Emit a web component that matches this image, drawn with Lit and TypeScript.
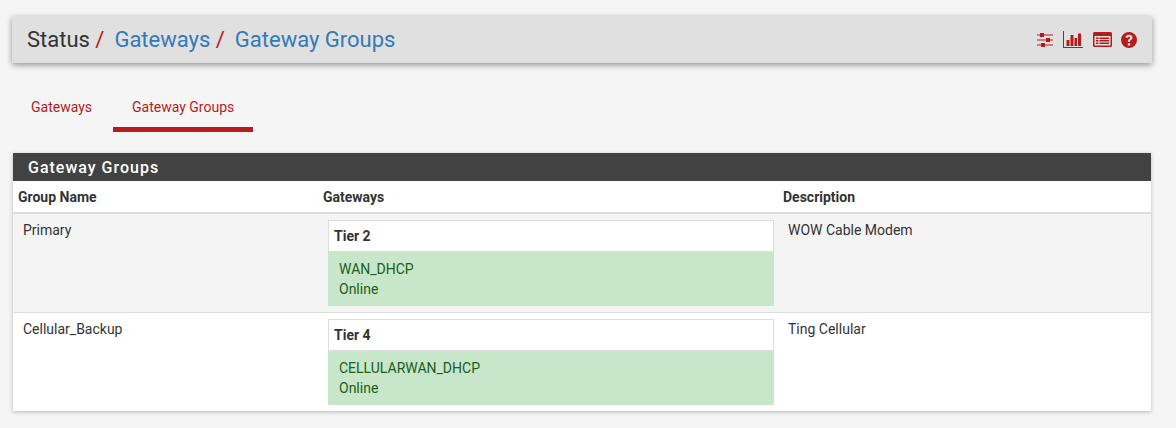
import { LitElement, html, css } from 'lit';
import { customElement } from 'lit/decorators.js';

const groups = [
  { name: 'Primary', tier: 'Tier 2', gateway: 'WAN_DHCP', status: 'Online', description: 'WOW Cable Modem' },
  { name: 'Cellular_Backup', tier: 'Tier 4', gateway: 'CELLULARWAN_DHCP', status: 'Online', description: 'Ting Cellular' },
];

@customElement('app-root')
export class AppRoot extends LitElement {
  static styles = css`
    :host {
      display: block;
      height: 428px;
      background: #f5f5f5;
      font-family: Roboto, sans-serif;
      font-size: 14px;
      color: #333;
      overflow: hidden;
    }

    .page {
      padding: 16px 24px 0 12px;
    }

    .breadcrumb {
      display: flex;
      align-items: center;
      justify-content: space-between;
      height: 47px;
      padding: 0 15px;
      background: #e0e0e0;
      box-shadow: 0 2px 6px rgba(0, 0, 0, 0.4);
    }

    .crumbs {
      font-size: 22px;
      white-space: pre;
    }

    .crumbs a {
      color: #337ab7;
      margin-left: 4.5px;
    }

    .crumbs i {
      font-style: normal;
      color: #b71c1c;
    }

    .icons {
      display: flex;
      align-items: center;
      gap: 9px;
    }

    .icons svg {
      display: block;
      fill: #b71c1c;
    }

    .icons svg.chart {
      margin: 0 1px 0 -1px;
    }

    .tabs {
      display: flex;
      margin-top: 24px;
    }

    .tab {
      width: 101px;
      height: 45px;
      padding: 11px 0 0 19px;
      box-sizing: border-box;
      line-height: 18px;
      white-space: nowrap;
      color: #b71c1c;
      border-bottom: 5px solid transparent;
    }

    .tab.active {
      width: 140px;
      border-bottom-color: #b71c1c;
    }

    .panel {
      margin: 21px 1px 0;
      width: 1138px;
      background: #fff;
      box-shadow: 0 1px 4px rgba(0, 0, 0, 0.25);
    }

    .panel h2 {
      margin: 0;
      height: 28px;
      padding-left: 15px;
      background: #424242;
      color: #fff;
      font-size: 16px;
      font-weight: 500;
      letter-spacing: 1px;
      line-height: 30px;
    }

    table {
      width: 100%;
      table-layout: fixed;
      border-collapse: separate;
      border-spacing: 0;
    }

    th {
      box-sizing: border-box;
      height: 33px;
      padding: 0 5px;
      text-align: left;
      font-weight: 700;
      border-bottom: 2px solid #ddd;
    }

    td {
      padding: 6px 10px;
      vertical-align: top;
      line-height: 20px;
    }

    td.gw {
      padding-right: 4px;
    }

    tbody tr:nth-child(odd) {
      background: #f4f4f4;
    }

    tbody tr + tr td {
      border-top: 1px solid #ddd;
    }

    .tier {
      border: 1px solid #ddd;
      border-bottom: 0;
      background: #fff;
    }

    .tier b {
      display: block;
      height: 30px;
      padding: 0 5px;
      line-height: 31px;
      border-bottom: 1px solid #ddd;
    }

    .status {
      height: 54px;
      padding: 7px 11px 0;
      box-sizing: border-box;
      margin: 0 -1px;
      background: #c8e6c9;
      color: #1b5e20;
      line-height: 20px;
    }
  `;

  render() {
    return html`
      <div class="page">
        <div class="breadcrumb">
          <div class="crumbs">Status<i> / </i><a>Gateways</a><i> / </i><a>Gateway Groups</a></div>
          <div class="icons">
            <svg width="18" height="16" viewBox="0 0 18 16">
              <path d="M0 2.400h16v1.200H0zM0 7.400h16v1.200H0zM0 12.400h16v1.200H0z" />
              <path d="M3 1h4v4H3zM9 6h4v4H9zM4 11h4v4H4z" />
            </svg>
            <svg class="chart" width="20" height="17" viewBox="0 0 20 17">
              <path d="M0 0h1v15.900H20V17H0z" />
              <path d="M3.500 9h3v6h-3zM7.500 4h3v11h-3zM11.500 7H14v8h-2.500zM15 2.500h3V15h-3z" />
            </svg>
            <svg width="19" height="15" viewBox="0 0 19 15">
              <path fill-rule="evenodd" d="M1.500 0h16A1.500 1.500 0 0 1 19 1.500v12a1.500 1.500 0 0 1-1.500 1.500h-16A1.500 1.500 0 0 1 0 13.500v-12A1.500 1.500 0 0 1 1.500 0zM1.500 4v9.200q0 .3.3.3h15.400q.3 0 .3-.3V4z" />
              <path d="M3 5.500h2.500v1.500H3zM6.500 5.500H16v1.500H6.500zM3 8h2.500v1.500H3zM6.500 8H16v1.500H6.500zM3 10.500h2.500V12H3zM6.500 10.500H16V12H6.500z" />
            </svg>
            <svg width="16" height="16" viewBox="0 0 16 16">
              <path fill-rule="evenodd" d="M8 0a8 8 0 1 1 0 16A8 8 0 0 1 8 0zM6.800 11.200v2.200h2.400v-2.200zM8 2.700c-2 0-3.300 1-3.600 2.800l2.100.5c.2-.8.7-1.300 1.400-1.300.7 0 1.200.4 1.200 1 0 .5-.4.800-1 1.200-.8.500-1.300 1.100-1.300 2.200v.6h2.300v-.4c0-.5.3-.8.9-1.200.9-.6 1.500-1.300 1.500-2.500 0-1.800-1.400-2.900-3.500-2.900z" />
            </svg>
          </div>
        </div>
        <div class="tabs">
          <div class="tab">Gateways</div>
          <div class="tab active">Gateway Groups</div>
        </div>
        <div class="panel">
          <h2>Gateway Groups</h2>
          <table>
            <colgroup>
              <col style="width: 305px" />
              <col style="width: 460px" />
              <col />
            </colgroup>
            <thead>
              <tr><th>Group Name</th><th>Gateways</th><th>Description</th></tr>
            </thead>
            <tbody>
              ${groups.map(
                (g) => html`
                  <tr>
                    <td>${g.name}</td>
                    <td class="gw">
                      <div class="tier">
                        <b>${g.tier}</b>
                        <div class="status">${g.gateway}<br />${g.status}</div>
                      </div>
                    </td>
                    <td>${g.description}</td>
                  </tr>
                `
              )}
            </tbody>
          </table>
        </div>
      </div>
    `;
  }
}
